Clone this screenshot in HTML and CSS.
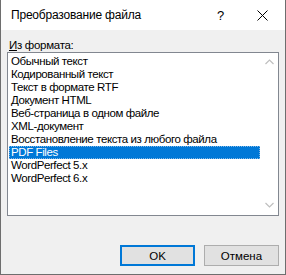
FILE: index.html
```html
<!DOCTYPE html>
<html lang="ru">
<head>
  <meta charset="UTF-8">
  <title>Преобразование файла</title>
  <link rel="stylesheet" href="styles.css">
</head>
<body>
  <div class="dialog">
    <!-- Title bar -->
    <div class="titlebar">
      <span class="title">Преобразование файла</span>
      <span class="help">?</span>
      <span class="close">
        <svg width="11" height="11" viewBox="0 0 11 11">
          <path d="M0.5 0.5 L10.5 10.5 M10.5 0.5 L0.5 10.5" stroke="#000" stroke-width="1"/>
        </svg>
      </span>
    </div>

    <!-- Content -->
    <div class="content">
      <div class="label"><u>И</u>з формата:</div>
      <div class="listbox">
        <ul class="items">
          <li>Обычный текст</li>
          <li>Кодированный текст</li>
          <li>Текст в формате RTF</li>
          <li>Документ HTML</li>
          <li>Веб-страница в одном файле</li>
          <li>XML-документ</li>
          <li>Восстановление текста из любого файла</li>
          <li class="selected">PDF Files</li>
          <li>WordPerfect 5.x</li>
          <li>WordPerfect 6.x</li>
        </ul>
        <div class="scrollbar">
          <svg width="9" height="6" viewBox="0 0 9 6">
            <path d="M0.5 5 L4.5 1 L8.5 5" fill="none" stroke="#bfbfbf" stroke-width="1.2"/>
          </svg>
          <svg width="9" height="6" viewBox="0 0 9 6">
            <path d="M0.5 1 L4.5 5 L8.5 1" fill="none" stroke="#bfbfbf" stroke-width="1.2"/>
          </svg>
        </div>
      </div>
      <div class="buttons">
        <button type="button" class="btn default">OK</button>
        <button type="button" class="btn">Отмена</button>
      </div>
    </div>
  </div>
</body>
</html>
```

FILE: styles.css
```css
body {
  margin: 0;
  padding: 0;
  font-family: "Liberation Sans", Arial, sans-serif;
  font-size: 11.5px;
  color: #000;
}
.dialog {
  width: 286px;
  height: 275px;
  box-sizing: border-box;
  background: #f0f0f0;
  border: 1px solid #6e6e6e;
  border-top: none;
  display: flex;
  flex-direction: column;
}
.titlebar {
  height: 30px;
  background: #fff;
  display: flex;
  align-items: center;
  padding-left: 10px;
}
.title {
  flex: 1;
  font-size: 12px;
  letter-spacing: -0.2px;
}
.help {
  width: 14px;
  font-size: 13px;
  margin-right: 26px;
}
.close {
  width: 11px;
  height: 11px;
  margin-right: 17px;
  display: flex;
}
.content {
  padding: 0 6px;
  display: flex;
  flex-direction: column;
}
.label {
  margin-top: 8px;
  padding-left: 2px;
  line-height: 14px;
  letter-spacing: -0.3px;
}
.listbox {
  height: 164px;
  box-sizing: border-box;
  border: 1px solid #828790;
  background: #fff;
  display: flex;
}
.items {
  list-style: none;
  margin: 0;
  padding: 2px 1px 0 1px;
  flex: 1;
}
.items li {
  height: 13px;
  line-height: 13px;
  padding-left: 2px;
  white-space: nowrap;
  letter-spacing: -0.4px;
}
.items li.selected {
  background: #0078d7;
  color: #fff;
  outline: 1px dotted #7fb8e8;
  outline-offset: -1px;
}
.scrollbar {
  width: 17px;
  display: flex;
  flex-direction: column;
  justify-content: space-between;
  align-items: center;
  padding: 6px 0 7px;
}
.buttons {
  margin-top: 29px;
  display: flex;
  justify-content: flex-end;
  gap: 9px;
}
.btn {
  width: 75px;
  height: 21px;
  box-sizing: border-box;
  background: #e1e1e1;
  border: 1px solid #adadad;
  font-family: "Liberation Sans", Arial, sans-serif;
  font-size: 11.5px;
  padding: 0;
  color: #000;
}
.btn.default {
  border: 2px solid #0078d7;
}
```
